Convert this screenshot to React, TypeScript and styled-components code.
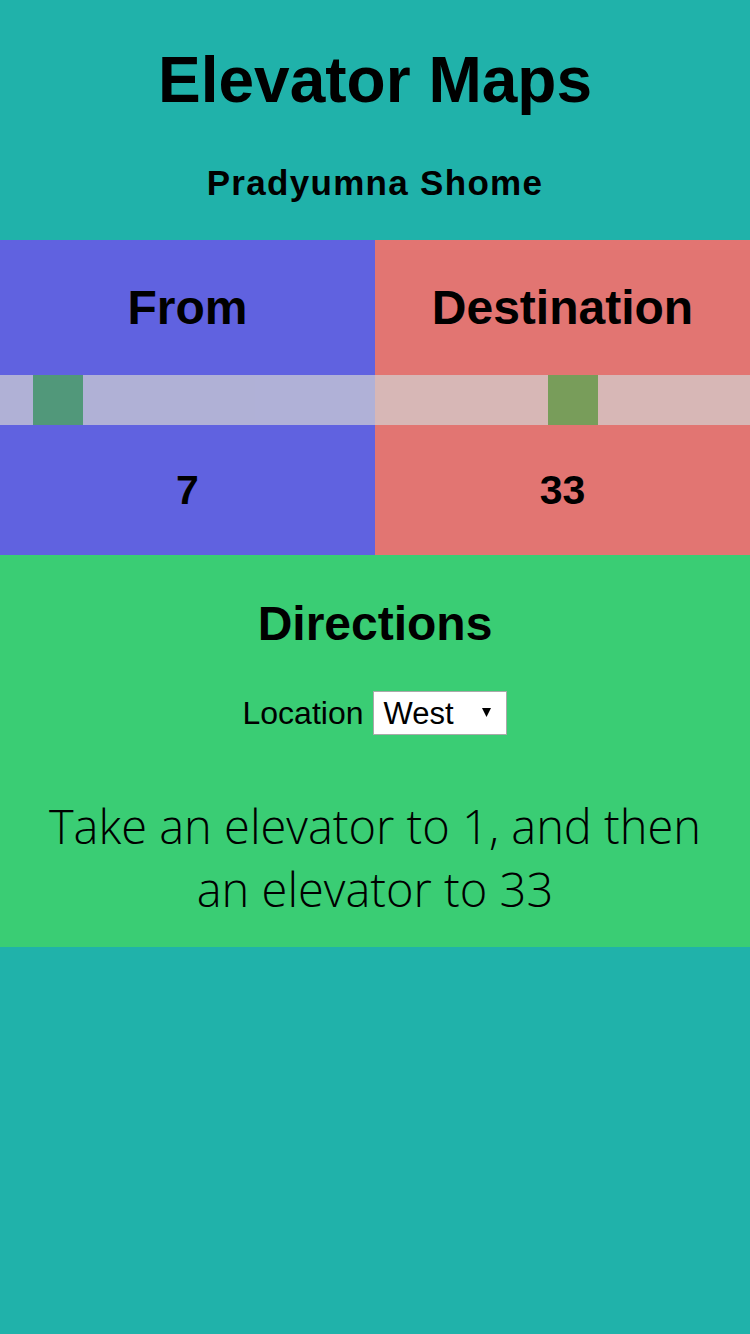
import styled, { createGlobalStyle } from "styled-components";

const GlobalStyle = createGlobalStyle`
  html, body {
    margin: 0;
    padding: 0;
    background: #20b2aa;
    font-family: "Liberation Sans", Arial, sans-serif;
    color: #000;
  }
`;

const Page = styled.div`
  width: 750px;
  min-height: 1334px;
  background: #20b2aa;
`;

const Header = styled.header`
  height: 240px;
  box-sizing: border-box;
  padding-top: 40px;
  text-align: center;
`;

const Title = styled.h1`
  margin: 0;
  font-size: 64px;
  line-height: 80px;
  font-weight: bold;
`;

const Author = styled.h2`
  margin: 33px 0 0;
  font-size: 35px;
  letter-spacing: 1.3px;
  line-height: 60px;
  font-weight: bold;
`;

const Floors = styled.section`
  display: grid;
  grid-template-columns: 1fr 1fr;
`;

const FloorPanel = styled.div<{ $bg: string }>`
  display: flex;
  flex-direction: column;
  background: ${({ $bg }) => $bg};
  text-align: center;
`;

const PanelTitle = styled.h2`
  margin: 0;
  height: 135px;
  line-height: 135px;
  font-size: 48px;
  font-weight: bold;
`;

const Slider = styled.input`
  -webkit-appearance: none;
  appearance: none;
  display: block;
  width: 100%;
  height: 50px;
  margin: 0;
  background: #d3d3d3;
  opacity: 0.7;
  outline: none;

  &::-webkit-slider-thumb {
    -webkit-appearance: none;
    appearance: none;
    width: 50px;
    height: 50px;
    background: #4caf50;
    border: none;
    cursor: pointer;
  }

  &::-moz-range-thumb {
    width: 50px;
    height: 50px;
    background: #4caf50;
    border: none;
    border-radius: 0;
  }
`;

const FloorNumber = styled.div`
  height: 130px;
  line-height: 130px;
  font-size: 41px;
  font-weight: bold;
`;

const Directions = styled.section`
  background: #3acd74;
  text-align: center;
  padding: 39px 30px 26px;
`;

const DirectionsTitle = styled.h2`
  margin: 0;
  font-size: 48px;
  line-height: 60px;
  font-weight: bold;
`;

const LocationRow = styled.div`
  display: flex;
  justify-content: center;
  align-items: center;
  gap: 10px;
  margin-top: 37px;
  font-size: 32px;
`;

const SelectWrap = styled.div`
  position: relative;
  width: 134px;
  height: 44px;
`;

const Select = styled.select`
  -webkit-appearance: none;
  appearance: none;
  width: 100%;
  height: 100%;
  box-sizing: border-box;
  border: 1px solid #a9a9a9;
  border-radius: 0;
  background: #fff;
  padding: 0 30px 0 9px;
  font-family: "Liberation Sans", Arial, sans-serif;
  font-size: 31px;
  color: #000;
`;

const Arrow = styled.svg`
  position: absolute;
  right: 16px;
  top: 17px;
  pointer-events: none;
`;

const Instruction = styled.p`
  margin: 60px 0 0;
  font-family: "Open Sans", "Noto Sans", sans-serif;
  font-weight: 300;
  font-size: 47px;
  line-height: 63px;
`;

export default function App() {
  return (
    <Page>
      <GlobalStyle />
      <Header>
        <Title>Elevator Maps</Title>
        <Author>Pradyumna Shome</Author>
      </Header>
      <Floors>
        <FloorPanel $bg="#6062e0">
          <PanelTitle>From</PanelTitle>
          <Slider type="range" min={1} max={61} defaultValue={7} />
          <FloorNumber>7</FloorNumber>
        </FloorPanel>
        <FloorPanel $bg="#e27572">
          <PanelTitle>Destination</PanelTitle>
          <Slider type="range" min={1} max={61} defaultValue={33} />
          <FloorNumber>33</FloorNumber>
        </FloorPanel>
      </Floors>
      <Directions>
        <DirectionsTitle>Directions</DirectionsTitle>
        <LocationRow>
          <span>Location</span>
          <SelectWrap>
            <Select defaultValue="West">
              <option>West</option>
              <option>East</option>
            </Select>
            <Arrow width="9" height="9" viewBox="0 0 9 9">
              <path d="M0 0 H9 L4.5 9 Z" fill="#000" />
            </Arrow>
          </SelectWrap>
        </LocationRow>
        <Instruction>Take an elevator to 1, and then an elevator to 33</Instruction>
      </Directions>
    </Page>
  );
}
